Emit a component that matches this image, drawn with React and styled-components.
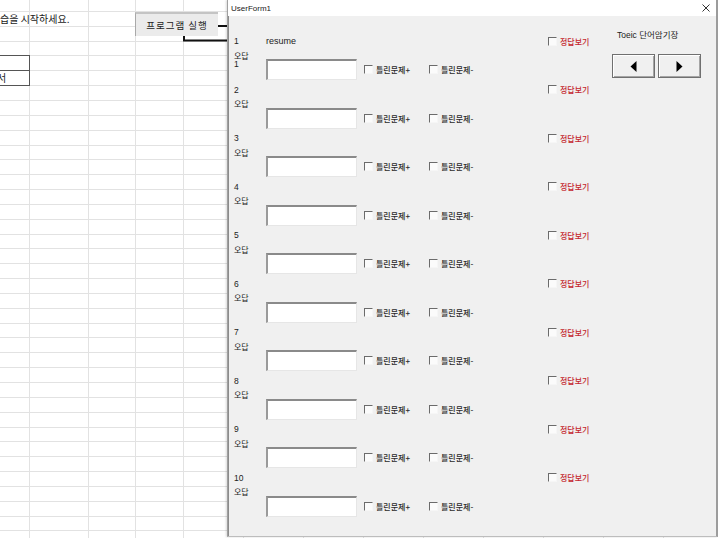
import React from "react";
import styled, { createGlobalStyle } from "styled-components";

const GlobalStyle = createGlobalStyle`
  html, body {
    margin: 0;
    padding: 0;
    background: #ffffff;
  }
  body {
    font-family: "Liberation Sans", "Noto Sans CJK KR", sans-serif;
  }
`;

const COLS = [30, 59, 47, 48, 60, 60, 60, 60, 60, 60, 60, 60, 60];
const ROW_COUNT = 38;

const Page = styled.div`
  width: 718px;
  height: 538px;
  position: relative;
  overflow: hidden;
  background: #ffffff;
`;

const Sheet = styled.div`
  display: flex;
  flex-direction: column;
  margin-top: -2.95px;
`;

const SheetRow = styled.div`
  display: flex;
  height: 14.85px;
  flex: none;
`;

const Cell = styled.div`
  box-sizing: border-box;
  flex: none;
  height: 100%;
  border-right: 1px solid #e2e2e2;
  border-bottom: 1px solid #e2e2e2;
  position: relative;
  white-space: nowrap;
  font-family: "Noto Sans CJK KR", sans-serif;
  font-size: 10px;
  line-height: 14px;
  color: #1a1a1a;
  overflow: ${(p) => (p.clip ? "hidden" : "visible")};
  ${(p) =>
    p.boxed &&
    `
    border: 1px solid #555555;
    border-top: none;
    margin-left: -1px;
  `}
  ${(p) => p.boxedTop && `border-top: 1px solid #555555; margin-top: -1px; height: calc(100% + 1px);`}
`;

const CellText = styled.span`
  display: inline-block;
  margin-left: ${(p) => p.shift || 0}px;
`;

const RunButton = styled.div`
  position: absolute;
  left: 135px;
  top: 12px;
  width: 83px;
  height: 24px;
  box-sizing: border-box;
  background: #ebebeb;
  border-top: 2px solid #c4c4c4;
  border-left: 1px solid #a9a9a9;
  display: flex;
  align-items: center;
  justify-content: center;
  font-family: "Noto Sans CJK KR", sans-serif;
  font-size: 9.5px;
  letter-spacing: 1px;
  color: #222;
`;

const Connector = styled.svg`
  position: absolute;
  left: 183px;
  top: 24px;
`;

const Window = styled.div`
  position: absolute;
  left: 227px;
  top: 0;
  width: 491px;
  height: 537px;
  box-sizing: border-box;
  border-left: 1px solid #a0a0a0;
  border-right: 2px solid #9c9c9c;
  border-bottom: 1px solid #bdbdbd;
  box-shadow: -1px 0 2px rgba(0, 0, 0, 0.15);
  display: flex;
  flex-direction: column;
  background: #f0f0f0;
`;

const TitleBar = styled.div`
  height: 16px;
  flex: none;
  background: #ffffff;
  display: flex;
  align-items: center;
  justify-content: space-between;
  padding: 0 6px 0 3px;
  font-family: "Liberation Sans", sans-serif;
  font-size: 8px;
  color: #222;
`;

const FormBody = styled.div`
  flex: 1;
  display: flex;
  border-left: 1px solid #8c8c8c;
`;

const Questions = styled.div`
  width: 383px;
  flex: none;
  box-sizing: border-box;
  padding: 17.5px 0 0 5px;
  display: flex;
  flex-direction: column;
`;

const Row = styled.div`
  height: 48.55px;
  flex: none;
  display: flex;
  flex-direction: column;
`;

const TopLine = styled.div`
  height: 15px;
  display: grid;
  grid-template-columns: 32px 282px auto;
  align-items: center;
`;

const Num = styled.span`
  font-family: "Liberation Sans", sans-serif;
  font-size: 8.5px;
  color: #222;
`;

const Resume = styled.span`
  font-family: "Liberation Sans", sans-serif;
  font-size: 9px;
  color: #222;
`;

const BottomLine = styled.div`
  display: flex;
  align-items: flex-start;
`;

const WrongLabel = styled.div`
  width: 32px;
  flex: none;
  margin-top: 3px;
  font-family: "Noto Sans CJK KR", sans-serif;
  font-size: 8px;
  line-height: 8.5px;
  color: #222;
  display: flex;
  flex-direction: column;
`;

const Inputs = styled.div`
  margin-top: 10.5px;
  display: flex;
  align-items: center;
`;

const TextBox = styled.div`
  width: 91px;
  height: 21px;
  box-sizing: border-box;
  background: #ffffff;
  border-top: 2px solid #8a8a8a;
  border-left: 2px solid #9a9a9a;
  border-right: 1px solid #e6e6e6;
  border-bottom: 1px solid #e6e6e6;
  margin-right: 7px;
`;

const Check = styled.label`
  display: flex;
  align-items: center;
  gap: 3px;
  width: ${(p) => p.w || "auto"};
  font-family: "Noto Sans CJK KR", sans-serif;
  font-size: 8px;
  font-weight: 500;
  color: ${(p) => (p.red ? "#c4262e" : "#2a2a2a")};
  white-space: nowrap;
`;

const Box = styled.span`
  width: 9px;
  height: 9px;
  box-sizing: border-box;
  background: #fbfbfb;
  border-top: 1px solid #6b6b6b;
  border-left: 1px solid #6b6b6b;
  border-right: 1px solid #f6f6f6;
  border-bottom: 1px solid #f6f6f6;
  flex: none;
`;

const Side = styled.div`
  padding: 13px 0 0 0;
  display: flex;
  flex-direction: column;
`;

const SideTitle = styled.div`
  padding-left: 5px;
  height: 12px;
  line-height: 12px;
  font-family: "Liberation Sans", "Noto Sans CJK KR", sans-serif;
  font-size: 8.5px;
  color: #222;
  white-space: nowrap;
`;

const NavGroup = styled.div`
  margin-top: 13px;
  display: flex;
  gap: 3px;
`;

const NavButton = styled.div`
  width: 43px;
  height: 24px;
  box-sizing: border-box;
  background: #f0f0f0;
  border: 1px solid #707070;
  box-shadow: inset 1px 1px #ffffff, inset -1px -1px #a5a5a5;
  display: flex;
  align-items: center;
  justify-content: center;
`;

const CheckBox = ({ children, w, red }) => (
  <Check w={w} red={red}>
    <Box />
    {children}
  </Check>
);

const Triangle = ({ dir }) => (
  <svg width="7" height="11" viewBox="0 0 7 11">
    {dir === "left" ? (
      <polygon points="6.5,0 6.5,11 0.5,5.5" fill="#000" />
    ) : (
      <polygon points="0.5,0 0.5,11 6.5,5.5" fill="#000" />
    )}
  </svg>
);

const renderCell = (r, c, w) => {
  if (r === 1 && c === 0)
    return (
      <Cell key={c} style={{ width: w }}>
        <CellText>습을 시작하세요.</CellText>
      </Cell>
    );
  if (r === 4 && c === 0)
    return <Cell key={c} style={{ width: w + 1 }} boxed boxedTop />;
  if (r === 5 && c === 0)
    return (
      <Cell key={c} style={{ width: w + 1 }} boxed clip>
        <CellText shift={-3}>서</CellText>
      </Cell>
    );
  return <Cell key={c} style={{ width: w }} />;
};

const App = () => {
  const rows = Array.from({ length: 10 }, (_, i) => i + 1);
  return (
    <Page>
      <GlobalStyle />
      <Sheet>
        {Array.from({ length: ROW_COUNT }, (_, r) => (
          <SheetRow key={r}>{COLS.map((w, c) => renderCell(r, c, w))}</SheetRow>
        ))}
      </Sheet>
      <RunButton>프로그램 실행</RunButton>
      <Connector width="45" height="19" viewBox="0 0 45 19">
        <line x1="35" y1="2" x2="45" y2="2" stroke="#111" strokeWidth="2" />
        <polyline
          points="1,12 1,16.5 45,16.5"
          fill="none"
          stroke="#111"
          strokeWidth="2"
        />
      </Connector>
      <Window>
        <TitleBar>
          <span>UserForm1</span>
          <svg width="8" height="8" viewBox="0 0 8 8">
            <path d="M0.5 0.5 L7.5 7.5 M7.5 0.5 L0.5 7.5" stroke="#333" strokeWidth="1" />
          </svg>
        </TitleBar>
        <FormBody>
          <Questions>
            {rows.map((n) => (
              <Row key={n}>
                <TopLine>
                  <Num>{n}</Num>
                  <Resume>{n === 1 ? "resume" : ""}</Resume>
                  <CheckBox red>정답보기</CheckBox>
                </TopLine>
                <BottomLine>
                  <WrongLabel>
                    <span>오답</span>
                    {n === 1 && <Num>1</Num>}
                  </WrongLabel>
                  <Inputs>
                    <TextBox />
                    <CheckBox w="65px">틀린문제+</CheckBox>
                    <CheckBox>틀린문제-</CheckBox>
                  </Inputs>
                </BottomLine>
              </Row>
            ))}
          </Questions>
          <Side>
            <SideTitle>Toeic 단어암기장</SideTitle>
            <NavGroup>
              <NavButton>
                <Triangle dir="left" />
              </NavButton>
              <NavButton>
                <Triangle dir="right" />
              </NavButton>
            </NavGroup>
          </Side>
        </FormBody>
      </Window>
    </Page>
  );
};

export default App;
